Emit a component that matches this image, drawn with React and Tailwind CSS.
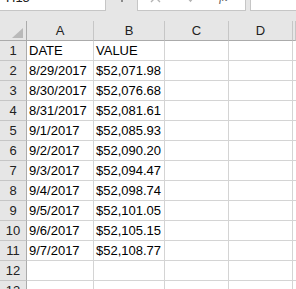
import React from 'react';

const rows = [
  ['DATE', 'VALUE'],
  ['8/29/2017', '$52,071.98'],
  ['8/30/2017', '$52,076.68'],
  ['8/31/2017', '$52,081.61'],
  ['9/1/2017', '$52,085.93'],
  ['9/2/2017', '$52,090.20'],
  ['9/3/2017', '$52,094.47'],
  ['9/4/2017', '$52,098.74'],
  ['9/5/2017', '$52,101.05'],
  ['9/6/2017', '$52,105.15'],
  ['9/7/2017', '$52,108.77'],
  ['', ''],
  ['', ''],
];

const cols = ['A', 'B', 'C', 'D', ''];

const App = () => {
  return (
    <div
      className="w-[296px] h-[289px] overflow-hidden bg-white text-[13px] text-black"
      style={{ fontFamily: '"Liberation Sans", Arial, sans-serif' }}
    >
      {/* Formula bar (cropped) */}
      <div className="h-[21px] bg-[#e6e6e6]">
        <div className="flex h-[11px] overflow-hidden">
          <div className="w-[106px] shrink-0 bg-white border-r border-b border-[#c6c6c6] pl-[6px]">
            <div className="-mt-[9px] leading-[13px] text-[#222]">H15</div>
          </div>
          <div className="w-[31px] shrink-0 flex justify-center">
            <div className="w-[2px] h-[2px] mt-[0px] bg-[#8a8a8a]" />
          </div>
          <div className="w-[109px] shrink-0 bg-white border-l border-r border-b border-[#c6c6c6] flex items-start">
            <svg className="ml-[12px] -mt-[8px]" width="11" height="11" viewBox="0 0 11 11">
              <path d="M1 1 L10 10 M10 1 L1 10" stroke="#b4b4b4" strokeWidth="1.4" fill="none" />
            </svg>
            <svg className="ml-[25px] -mt-[8px]" width="12" height="11" viewBox="0 0 12 11">
              <path d="M1 5 L4.5 9 L11 1" stroke="#b4b4b4" strokeWidth="1.6" fill="none" />
            </svg>
            <div className="ml-[21px] -mt-[9px] leading-[13px] italic text-[12px] text-[#555]">
              <span style={{ fontFamily: '"Liberation Serif", serif' }}>fx</span>
            </div>
          </div>
          <div className="w-[4px] shrink-0" />
          <div className="flex-1 bg-white border-l border-b border-[#c6c6c6]" />
        </div>
      </div>

      {/* Grid */}
      <div className="grid grid-cols-[27px_67px_71px_64px_64px_1fr] leading-[19px]">
        {/* Header row */}
        <div className="h-[20px] bg-[#e6e6e6] border-r border-b border-[#ababab] flex justify-end items-end pr-[3px] pb-[2px]">
          <svg width="11" height="10" viewBox="0 0 11 10">
            <polygon points="11,0 11,10 0,10" fill="#b9b9b9" />
          </svg>
        </div>
        {cols.map((c, i) => (
          <div
            key={i}
            className="h-[20px] bg-[#e6e6e6] border-r border-[#c6c6c6] border-b-[#ababab] border-b text-center text-[#222]"
          >
            {c}
          </div>
        ))}

        {/* Data rows */}
        {rows.map((r, i) => (
          <React.Fragment key={i}>
            <div className="h-[20px] bg-[#e6e6e6] border-r border-r-[#ababab] border-b border-b-[#c6c6c6] text-center text-[#222]">
              {i + 1}
            </div>
            <div className="h-[20px] border-r border-b border-[#d4d4d4] pl-[2px] whitespace-nowrap">{r[0]}</div>
            <div className="h-[20px] border-r border-b border-[#d4d4d4] pl-[2px] whitespace-nowrap">{r[1]}</div>
            <div className="h-[20px] border-r border-b border-[#d4d4d4]" />
            <div className="h-[20px] border-r border-b border-[#d4d4d4]" />
            <div className="h-[20px] border-b border-[#d4d4d4]" />
          </React.Fragment>
        ))}
      </div>
    </div>
  );
};

export default App;
